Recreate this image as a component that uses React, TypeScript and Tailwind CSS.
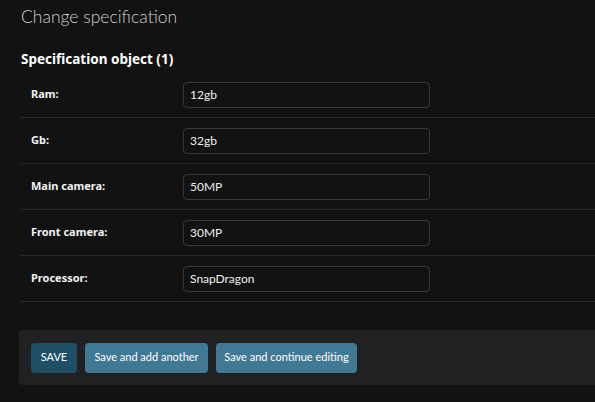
const fields = [
  { label: 'Ram:', value: '12gb' },
  { label: 'Gb:', value: '32gb' },
  { label: 'Main camera:', value: '50MP' },
  { label: 'Front camera:', value: '30MP' },
  { label: 'Processor:', value: 'SnapDragon' },
];

const font = { fontFamily: '"Noto Sans", "Open Sans", Arial, sans-serif' };
const light = { fontFamily: 'Lato, "Noto Sans", Arial, sans-serif' };

export default function App() {
  return (
    <div
      className="min-h-[402px] w-full bg-[#121212] pl-[19px] overflow-hidden"
      style={font}
    >
      <h1
        className="pl-[2px] pt-[3px] text-[17.5px] font-light leading-[28px] text-[#d0d0d0]"
        style={light}
      >
        Change specification
      </h1>

      <div className="pl-[2px]">
        <h2 className="mt-[18px] text-[13.5px] font-bold leading-[20px] text-white">
          Specification object (1)
        </h2>

        <div className="mt-[3px]">
          {fields.map((f) => (
            <div
              key={f.label}
              className="flex h-[46px] items-center border-b border-[#2a2a2a]"
            >
              <label className="w-[162px] pl-[10px] text-[11px] font-bold text-[#f2f2f2]">
                {f.label}
              </label>
              <input
                readOnly
                value={f.value}
                style={light}
                className="h-[26px] w-[247px] rounded-[4px] border border-[#383838] bg-[#121212] px-[6px] text-[12px] text-[#eeeeee] outline-none"
              />
            </div>
          ))}
        </div>
      </div>

      <div
        className="mt-[28px] flex h-[55px] items-center gap-[8px] rounded-l-[4px] bg-[#212121] pl-[12px]"
        style={light}
      >
        <button className="h-[30px] w-[46px] whitespace-nowrap rounded-[4px] bg-[#1f4f66] text-[11px] text-white">
          SAVE
        </button>
        <button className="h-[30px] w-[123px] whitespace-nowrap rounded-[4px] bg-[#417893] text-[11px] text-white">
          Save and add another
        </button>
        <button className="h-[30px] w-[141px] whitespace-nowrap rounded-[4px] bg-[#417893] text-[11px] text-white">
          Save and continue editing
        </button>
      </div>
    </div>
  );
}
